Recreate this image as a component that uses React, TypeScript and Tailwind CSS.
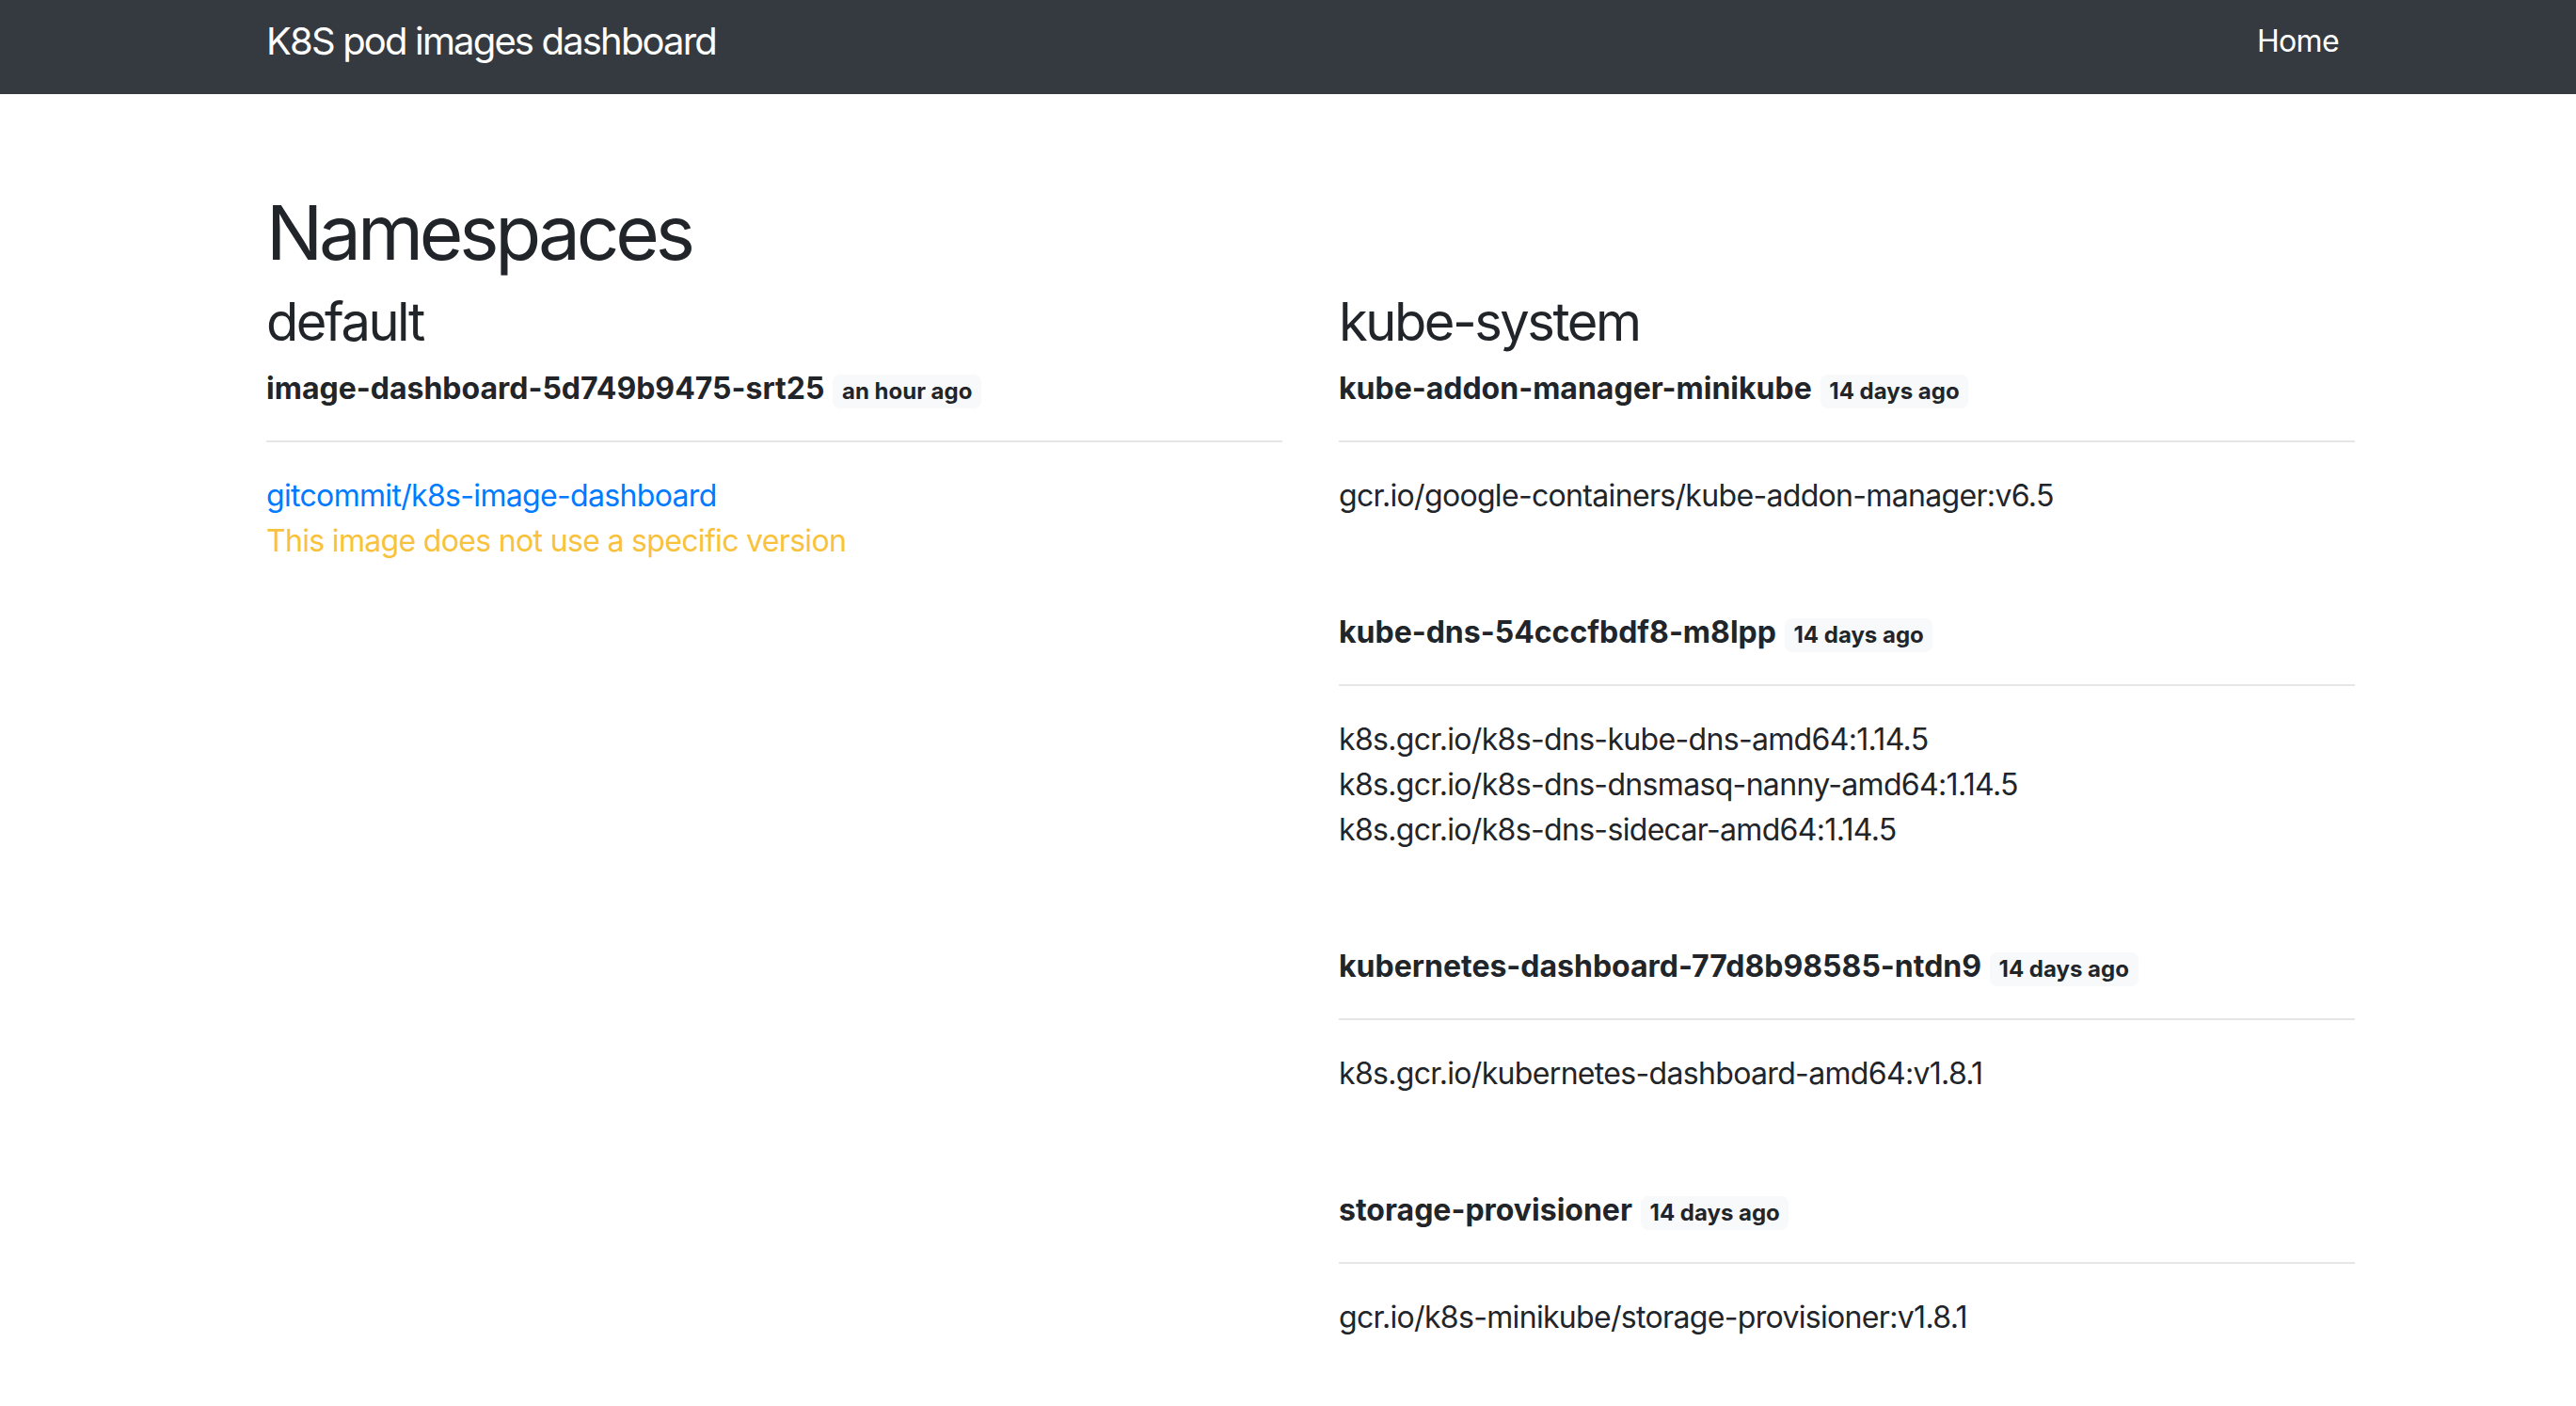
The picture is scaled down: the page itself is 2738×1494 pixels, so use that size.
import React from "react";

type Pod = { name: string; age: string; images: React.ReactNode[] };

const kubeSystem: Pod[] = [
  {
    name: "kube-addon-manager-minikube",
    age: "14 days ago",
    images: ["gcr.io/google-containers/kube-addon-manager:v6.5"],
  },
  {
    name: "kube-dns-54cccfbdf8-m8lpp",
    age: "14 days ago",
    images: [
      "k8s.gcr.io/k8s-dns-kube-dns-amd64:1.14.5",
      "k8s.gcr.io/k8s-dns-dnsmasq-nanny-amd64:1.14.5",
      "k8s.gcr.io/k8s-dns-sidecar-amd64:1.14.5",
    ],
  },
  {
    name: "kubernetes-dashboard-77d8b98585-ntdn9",
    age: "14 days ago",
    images: ["k8s.gcr.io/kubernetes-dashboard-amd64:v1.8.1"],
  },
  {
    name: "storage-provisioner",
    age: "14 days ago",
    images: ["gcr.io/k8s-minikube/storage-provisioner:v1.8.1"],
  },
];

function PodBlock({ pod, first }: { pod: Pod; first: boolean }) {
  return (
    <div className={first ? "mt-[19px]" : "mt-[101px]"}>
      <div className="flex h-[40px] items-baseline gap-[9px]">
        <span className="text-[32px] leading-[40px] font-bold text-[#212529]">{pod.name}</span>
        <span className="rounded-[8px] bg-[#f8f9fa] px-[9.6px] py-[6px] text-[24px] leading-none font-bold text-[#212529]">
          {pod.age}
        </span>
      </div>
      <div className="mt-[35px] h-[2px] bg-[#e6e6e6]" />
      <div className="mt-[33px] flex flex-col">
        {pod.images.map((img, i) => (
          <div key={i} className="text-[32px] leading-[48px] tracking-[-0.021em] text-[#212529]">
            {img}
          </div>
        ))}
      </div>
    </div>
  );
}

export default function App() {
  const defaultPod: Pod = {
    name: "image-dashboard-5d749b9475-srt25",
    age: "an hour ago",
    images: [
      <a key="a" className="text-[#007bff] no-underline">gitcommit/k8s-image-dashboard</a>,
      <span key="b" className="text-[#f9c23c]">This image does not use a specific version</span>,
    ],
  };
  return (
    <div className="min-h-[1494px] w-full bg-white font-[Inter,sans-serif] text-[#212529]">
      <nav className="h-[100px] w-full bg-[#343a40]">
        <div className="ml-[283px] flex w-[2219px] items-start justify-between">
          <span className="mt-[24px] text-[40px] leading-[40px] tracking-[-0.046em] text-white">K8S pod images dashboard</span>
          <span className="mt-[28px] mr-[16px] text-[32px] leading-[32px] tracking-[-0.02em] text-white">Home</span>
        </div>
      </nav>
      <main className="ml-[283px] w-[2220px] pt-[99px]">
        <h1 className="text-[80px] leading-[96px] font-normal tracking-[-0.052em]">Namespaces</h1>
        <div className="mt-[15px] grid grid-cols-2 gap-x-[60px]">
          <section>
            <h3 className="text-[56px] leading-[64px] tracking-[-0.044em]">default</h3>
            <PodBlock pod={defaultPod} first />
          </section>
          <section>
            <h3 className="text-[56px] leading-[64px] tracking-[-0.044em]">kube-system</h3>
            {kubeSystem.map((p, i) => (
              <PodBlock key={p.name} pod={p} first={i === 0} />
            ))}
          </section>
        </div>
      </main>
    </div>
  );
}
